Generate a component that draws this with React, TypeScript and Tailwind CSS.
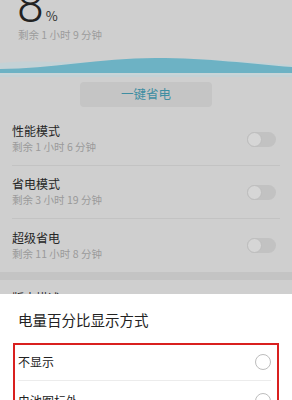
import React from 'react';

const FONT = '"Noto Sans CJK SC", "Noto Sans", Roboto, sans-serif';

const modes = [
  { title: '性能模式', sub: '剩余 1 小时 6 分钟' },
  { title: '省电模式', sub: '剩余 3 小时 19 分钟' },
  { title: '超级省电', sub: '剩余 11 小时 8 分钟' },
];

const Toggle = () => (
  <div className="relative w-[29px] h-[15px] rounded-full bg-[#c2c2c2]">
    <div className="absolute left-0 top-0 w-[15px] h-[15px] rounded-full bg-[#d6d6d6] border border-[#bdbdbd]" />
  </div>
);

const Wave = () => (
  <svg width="292" height="24" viewBox="0 0 292 24" className="block">
    <path d="M0 10 C40 6 80 12 130 8 S220 6 292 12 L292 24 L0 24 Z" fill="#c4d2d6" />
    <path d="M0 16 C50 16 100 5 155 5 S250 11 292 14 L292 20 L0 20 Z" fill="#6db2c4" />
    <rect x="0" y="20" width="292" height="2" fill="#c8d5d8" />
  </svg>
);

export default function App() {
  return (
    <div
      className="relative w-[292px] h-[400px] overflow-hidden bg-[#cfcfcf]"
      style={{ fontFamily: FONT }}
    >
      <div className="flex flex-col pl-[17px] h-[53px]">
        <div className="flex items-end -mt-[6px] h-[36px]">
          <span
            className="text-[48px] leading-none font-light text-[#222]"
            style={{ fontFamily: 'Roboto, sans-serif' }}
          >
            8
          </span>
          <span className="text-[13px] leading-none text-[#333] ml-[2px] mb-[8px]">%</span>
        </div>
        <div className="mt-[0px] ml-[1px] text-[10.5px] leading-none text-[#9c9c9c]">剩余 1 小时 9 分钟</div>
      </div>

      <Wave />

      <div className="flex justify-center pt-[5px]">
        <div className="w-[132px] h-[25px] rounded-[4px] bg-[#c5c5c5] flex items-center justify-center text-[12.5px] text-[#3f8ea2]">
          一键省电
        </div>
      </div>

      <div className="mt-[6px] px-[12px]">
        {modes.map((m, i) => (
          <div
            key={m.title}
            className={`flex items-center justify-between h-[53px] ${i < modes.length - 1 ? 'border-b border-[#c3c3c3]' : ''}`}
          >
            <div>
              <div className="text-[12px] leading-none text-[#262626]">{m.title}</div>
              <div className="mt-[5px] text-[10.5px] leading-none text-[#9a9a9a]">{m.sub}</div>
            </div>
            <div className="mr-[4px]">
              <Toggle />
            </div>
          </div>
        ))}
      </div>

      <div className="h-[8px] bg-[#c4c4c4]" />
      <div className="flex justify-between px-[12px] pt-[12px]">
        <div className="text-[12px] leading-none text-[#262626]">版本描述</div>
        <div className="text-[10px] leading-none text-[#aaa] mr-[6px]">›</div>
      </div>

      <div className="absolute left-0 right-0 top-[294px] bottom-0 bg-white">
        <div className="pl-[18px] pt-[19px] text-[14.5px] leading-none text-[#222]">电量百分比显示方式</div>
        <div className="mx-[13px] mt-[15px] border-2 border-[#d9201f] h-[80px]">
          <div className="flex items-center justify-between h-[36px] ml-[3px] mr-[6px] border-b border-[#ececec]">
            <span className="text-[12px] leading-none text-[#222]">不显示</span>
            <span className="w-[16px] h-[16px] rounded-full border border-[#bdbdbd]" />
          </div>
          <div className="flex items-start justify-between ml-[3px] mr-[6px]">
            <span className="text-[12px] leading-none text-[#222] mt-[14px]">电池图标外</span>
            <span className="w-[16px] h-[16px] rounded-full border border-[#bdbdbd] mt-[12px]" />
          </div>
        </div>
      </div>
    </div>
  );
}
